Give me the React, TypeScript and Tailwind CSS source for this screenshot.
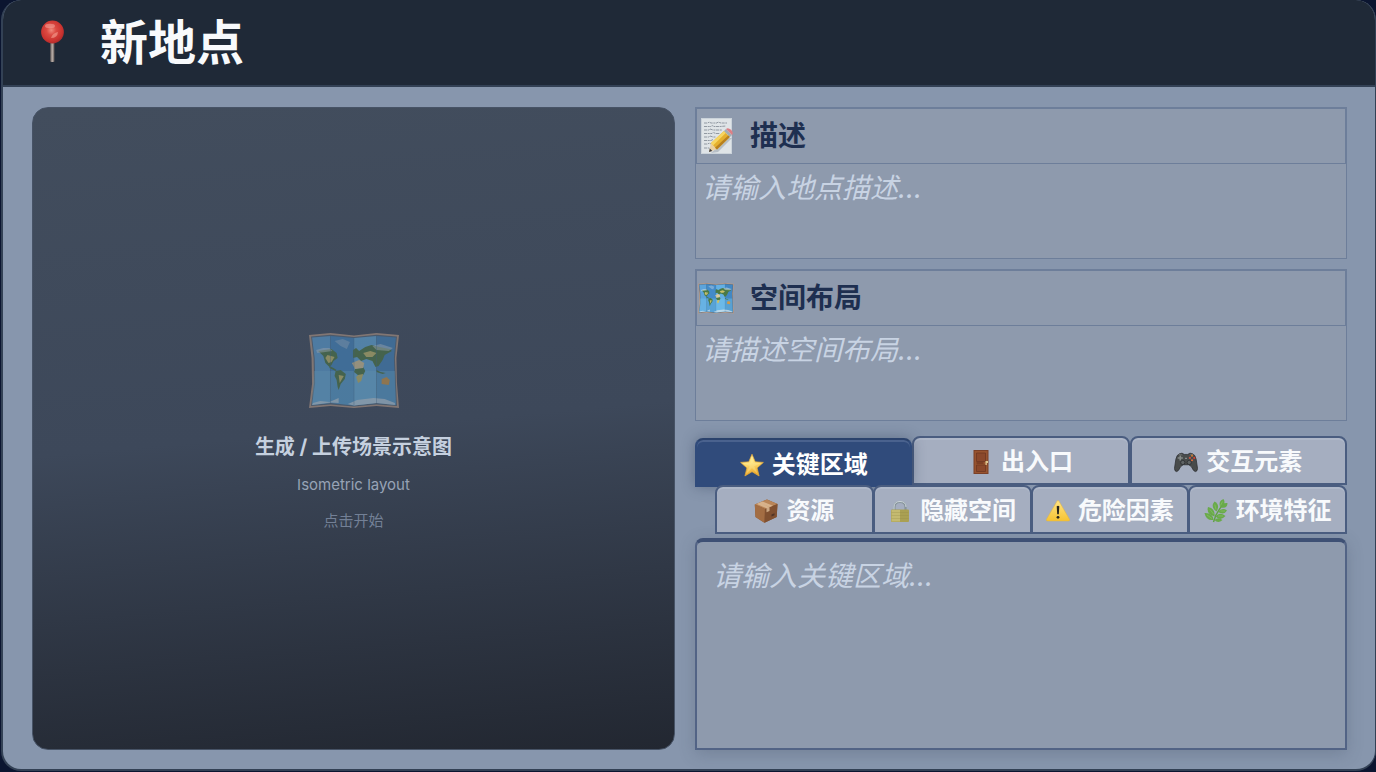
import { useState } from 'react';
import type { ReactNode } from 'react';

interface IconProps {
  className?: string;
}

function PinIcon({ className }: IconProps) {
  return (
    <svg viewBox="0 0 48 48" className={className} aria-hidden="true">
      <defs>
        <radialGradient id="pinHead" cx="0.45" cy="0.42" r="0.6">
          <stop offset="0" stopColor="#f08a7c" />
          <stop offset="0.35" stopColor="#dc4a42" />
          <stop offset="0.8" stopColor="#c9322f" />
          <stop offset="1" stopColor="#a82a2b" />
        </radialGradient>
        <linearGradient id="pinStem">
          <stop offset="0" stopColor="#6b6260" />
          <stop offset="0.5" stopColor="#b5aaa4" />
          <stop offset="1" stopColor="#5d5553" />
        </linearGradient>
      </defs>
      <path d="M22.3 23h4.2v19.500q-2.100 1.200-4.200 0z" fill="url(#pinStem)" />
      <circle cx="24.500" cy="13" r="11.400" fill="url(#pinHead)" />
      <ellipse cx="22" cy="7" rx="5" ry="2.200" fill="#f3a097" opacity="0.600" />
      <path d="M23 19q1.500-5 7-6-.5 6-7 6z" fill="#f5a394" opacity="0.600" />
    </svg>
  );
}

function MapIcon({ className }: IconProps) {
  return (
    <svg viewBox="0 0 88 76" preserveAspectRatio="none" className={className} aria-hidden="true">
      <path d="M0 2 21 0 44 2.500 66 0l22 2-2.500 23L86 50l2 25-22-2-22 2-23-2-21 2 3-24.500L2.500 25z" fill="#b99b87" />
      <path d="M2 3.500 21 1.800 44 4l22-2.200 20 1.700-2 21.500 1 25 1 23-20-1.600L44 73.500l-23-2.100L2 73l3-23L4.500 25z" fill="#55687b" />
      <path d="M3 4.500 21 3v67L3 72l3-22-.5-25z" fill="#5ca4dc" />
      <path d="M21 3l23 2v67.500L21 70z" fill="#438bc9" />
      <path d="M44 5l22-2v67l-22 2.500z" fill="#64b0e4" />
      <path d="M66 3l19 1.500L83 25l1 25 1 22-19-2z" fill="#4288c4" />
      <path d="M5 38h79l1 34-19-2-22 2.500L21 70 3 72z" fill="#77c8ee" opacity="0.400" />
      <g fill="#4b7a44">
        <path d="M9 18l6-1 7-1 5 4 1 5-4 3-2 4-2 2-4-4-2-7z" />
        <path d="M20 33l4 2 3 2-1 1-6-3z" />
        <path d="M26 38l5-1 5 4-1 5-4 5-2 6-1-3-1-7-2-4z" />
        <path d="M43 17l3-2 3 3 6-4 6-2 8 2 10 2 2 2-7 4-2 5-4 6-3 1-3-6-6-2-5 2-4-4-4 1z" />
        <path d="M45 36l8-2 2 4-2 4-4 1-5-4z" />
        <path d="M66 37l4 2 5 1-3 1-6-2z" />
      </g>
      <g fill="#c9c06b">
        <path d="M18 22l7 2-3 5-3 1-3-5z" />
        <path d="M29 42l5 1-4 7z" />
        <path d="M53 20l7-2 6 2-4 4-6 0z" />
        <path d="M48 42l5-1-2 7-3 2-2-6z" />
        <path d="M71 46l5-2 3 3-1 5-7-1z" fill="#d09a48" />
      </g>
      <path d="M42 30l7-3 5 3-1 5-8 1z" fill="#dccb9b" />
      <g fill="#dce5eb">
        <path d="M7 17l7-2 6 0 3 3-7 1-8 1z" opacity="0.500" />
        <path d="M25 8l8-2 7 3-3 7-6-3z" opacity="0.350" />
        <path d="M62 13l8-2 12 4-4 3-12-1z" opacity="0.500" />
        <path d="M4 70l7-2 9 1 9-4v5l-8-.5L3 72zM38 71l9-4 16-2 11 1 10 4v2l-18-2-22 2.500z" opacity="0.700" />
      </g>
      <path d="M21 3v67M44 5v67M66 3v67" stroke="#3c7099" strokeWidth="0.600" opacity="0.600" fill="none" />
    </svg>
  );
}

function MemoIcon({ className }: IconProps) {
  return (
    <svg viewBox="0 0 36 36" className={className} aria-hidden="true">
      <path d="M3 0h31v36H3z" fill="#cbd3da" />
      <path d="M4 1h29v34H4z" fill="#dfe4e7" />
      <path
        d="M6 5h4l1-1 2 1h6l1-1 3 1h6M6 8.500h7l1-1 2 1h6l6-.5M6 12h5l1-1 3 1h9M6 15.500h8l1-1 3 1h4M6 19h5l1-1 3 1h3M6 22.500h7l2-1M6 26h4l1-1 2 1M6 30h5l2 1"
        stroke="#88909a"
        strokeWidth="0.900"
        strokeDasharray="3 .7 2 .6"
        fill="none"
      />
      <path d="M13 35l17-15 4 0-14 14z" fill="#8f99a5" opacity="0.500" />
      <path d="M11 34l2-9 6 6z" fill="#ead0a0" />
      <path d="M11 34l.8-3.500 2.500 2.500z" fill="#3f3b3b" />
      <path d="M13 25 26 13l6 6-13 12.500z" fill="#e5b02e" />
      <path d="M13 25 26 13l2 1.800L15 27.500z" fill="#f6d560" />
      <path d="M17 29.800 30.500 17.200l1.500 1.600L19 31.500z" fill="#b8801f" />
      <path d="M26 13l2-2 6 6-2 2z" fill="#a4adb3" />
      <path d="M28 11q2-2 5 .8t1 5.200z" fill="#dd7f85" />
    </svg>
  );
}

function StarIcon({ className }: IconProps) {
  return (
    <svg viewBox="0 0 24 24" className={className} aria-hidden="true">
      <defs>
        <linearGradient id="starFill" x1="0" y1="0" x2="0.2" y2="1">
          <stop offset="0" stopColor="#fff0a0" />
          <stop offset="0.45" stopColor="#ffe27a" />
          <stop offset="1" stopColor="#eca92b" />
        </linearGradient>
      </defs>
      <path
        d="M12 1.200 15.200 8.800l8.200.6-6.300 5.500 2 8.100L12 18.700l-7.100 4.300 2-8.100L.6 9.400l8.200-.6z"
        fill="url(#starFill)"
        stroke="#e7ab38"
        strokeWidth="0.700"
        strokeLinejoin="round"
      />
      <path d="M12 3l1.500 7 8-.3-7.300 3.600 3.700 8L12 15l-5.900 6 3.500-8L2.500 9.700l8 .3z" fill="#fff3b0" opacity="0.300" />
    </svg>
  );
}

function DoorIcon({ className }: IconProps) {
  return (
    <svg viewBox="0 0 24 24" className={className} aria-hidden="true">
      <path d="M4.500 0h15v24h-15z" fill="#7b4027" />
      <path d="M5.500 1h13v22h-13z" fill="#97532f" />
      <path d="M7.500 3h9v8.500h-9zM7.500 15h9v6.500h-9z" fill="#8a482b" stroke="#6f3722" strokeWidth="0.800" />
      <path d="M7.500 13h7" stroke="#622d1b" />
      <path d="M16.500 11h2.500v2h-1.200v2h-1.300z" fill="#ddc58d" />
    </svg>
  );
}

function GamepadIcon({ className }: IconProps) {
  return (
    <svg viewBox="0 0 26 24" className={className} aria-hidden="true">
      <path
        d="M6 3q3-1.500 5 .8h4Q17 1.500 20 3q3 1 4 6l1.500 10q0 3-2.300 3.400-2 0-4.400-5.400L16 15h-6l-2.800 2Q4.800 22.400 2.800 22.400.5 22 .5 19L2 9q1-5 4-6z"
        fill="#484b4b"
        stroke="#2b2e31"
        strokeWidth="0.800"
      />
      <path d="M5 4q2-1 4 .5M17 4.500q2-1.500 4-.5" stroke="#6d7172" fill="none" />
      <path d="M6.800 5v5.500M4 7.700h5.600" stroke="#858b89" strokeWidth="1.800" />
      <circle cx="19.500" cy="5.100" r="1.200" fill="#c47b35" />
      <circle cx="22" cy="7.600" r="1.200" fill="#d34232" />
      <circle cx="17.200" cy="7.600" r="1.200" fill="#c15544" />
      <circle cx="19.500" cy="10.100" r="1.200" fill="#d96a3e" />
      <g fill="#5f6465" stroke="#292c30" strokeWidth="0.800">
        <circle cx="9.500" cy="12.500" r="2.300" />
        <circle cx="16.500" cy="12.500" r="2.300" />
      </g>
      <path d="M12 8h2" stroke="#a2a8a6" />
    </svg>
  );
}

function BoxIcon({ className }: IconProps) {
  return (
    <svg viewBox="0 0 24 24" className={className} aria-hidden="true">
      <path d="M.8 5.500 13 .5 23.500 5l-.8 13L10.500 23.800 1.500 18z" fill="#8b5936" />
      <path d="M.8 5.500 13 .5 23.500 5 11 10z" fill="#b98558" />
      <path d="M.8 5.500 11 10l-.5 13.800-9-5.800z" fill="#a36d43" />
      <path d="M11 10l12.500-5-.8 13-12.200 5.800z" fill="#805030" />
      <path d="M5 3.800 15.500 8v4l-3 1.200V9.300L2.800 5zM8.500 2.400 19 6.800l-3 1.200L5 3.800z" fill="#dfbd98" opacity="0.800" />
      <path d="M17.500 15.500l3-1.300v2l-3 1.400z" fill="#4f3326" />
    </svg>
  );
}

function LockIcon({ className }: IconProps) {
  return (
    <svg viewBox="0 0 24 24" className={className} aria-hidden="true">
      <path d="M6.500 11V8q0-5 5.500-5t5.500 5v3" stroke="#87949a" strokeWidth="2.200" fill="none" />
      <path d="M6 11V8Q6 2.500 12 2.500T18 8" stroke="#d3dde1" strokeWidth="0.900" fill="none" />
      <rect x="3" y="10.500" width="18" height="12.500" rx="1" fill="#aaa052" />
      <path d="M3.500 11h8.500v11.500H3.500z" fill="#c4ba70" />
      <path d="M3.500 13.500h17M3.500 16.500h17M3.500 19.500h17" stroke="#918745" strokeWidth="0.500" opacity="0.500" />
    </svg>
  );
}

function WarningIcon({ className }: IconProps) {
  return (
    <svg viewBox="0 0 24 24" className={className} aria-hidden="true">
      <defs>
        <linearGradient id="warnFill" x1="0" y1="0" x2="0" y2="1">
          <stop offset="0" stopColor="#ffe483" />
          <stop offset="1" stopColor="#f7c332" />
        </linearGradient>
      </defs>
      <path
        d="M11 2.200q1-1.500 2 0l10.500 18q.8 1.800-1.200 1.800H1.700q-2 0-1.200-1.800z"
        fill="url(#warnFill)"
        stroke="#e3b540"
        strokeWidth="0.500"
      />
      <path d="M10.700 7.300q1.300-.9 2.600 0l-.5 8h-1.600z" fill="#28251d" />
      <circle cx="12" cy="18.300" r="1.400" fill="#28251d" />
    </svg>
  );
}

function HerbIcon({ className }: IconProps) {
  return (
    <svg viewBox="0 0 24 24" className={className} aria-hidden="true">
      <path d="M9.500 23Q12 13 20 4.500" stroke="#60a343" strokeWidth="1.400" fill="none" />
      <g fill="#69aa4a">
        <path d="M16 8q-2-6 3.500-8Q23 5 16 8z" />
        <path d="M17 8.500q1-5 6.500-4.500 0 6-6.500 4.500z" />
        <path d="M12.500 12.500Q6 8 10.500 2.500q6 3.500 2 10z" />
        <path d="M14 13q4-5 9-1.500-3 5-9 1.500z" />
        <path d="M10.500 17.500Q2 15 4 8q7.500 1.500 6.500 9.500z" />
        <path d="M11.500 17.500q4-5 10-.5-5 5.500-10 .5z" />
        <path d="M9.500 21Q2 22 .5 14q8.500-.5 9 7z" />
        <path d="M10.500 21q3.500-3.500 8 0-4.500 4-8 0z" />
      </g>
      <path
        d="M16.500 6.500l2-4M12 10.500l-1.200-5M9.500 15l-3.500-4.500M8 19.500l-5-3.500M16.500 12h4.500M14 17h5"
        stroke="#8dc568"
        strokeWidth="0.600"
        fill="none"
      />
    </svg>
  );
}

const tabs = [
  { id: 'areas', label: '关键区域', icon: StarIcon },
  { id: 'exits', label: '出入口', icon: DoorIcon },
  { id: 'interactive', label: '交互元素', icon: GamepadIcon },
  { id: 'resources', label: '资源', icon: BoxIcon },
  { id: 'hidden', label: '隐藏空间', icon: LockIcon },
  { id: 'hazards', label: '危险因素', icon: WarningIcon },
  { id: 'environment', label: '环境特征', icon: HerbIcon },
];

interface TabButtonProps {
  tab: (typeof tabs)[number];
  active: boolean;
  onSelect: (id: string) => void;
}

function TabButton({ tab, active, onSelect }: TabButtonProps) {
  const Icon = tab.icon;

  return (
    <button
      type="button"
      role="tab"
      id={`tab-${tab.id}`}
      aria-selected={active}
      aria-controls="tab-panel"
      onClick={() => onSelect(tab.id)}
      className={
        active
          ? 'flex h-[49px] min-w-0 flex-1 translate-y-0.5 items-center justify-center gap-2 rounded-t-lg border-2 border-[#304b7b] border-t-[#2b426c] bg-[#304b7b] pt-1 text-2xl font-bold whitespace-nowrap text-white shadow-[0_0_14px_rgba(40,55,80,0.4),inset_0_2px_0_#4a628e]'
          : 'flex h-[49px] min-w-0 flex-1 items-center justify-center gap-2 rounded-t-lg border-2 border-[#4a5d80] bg-[#a5aec0] pt-0.5 text-2xl font-semibold whitespace-nowrap text-[#f8fafc] shadow-[inset_0_2px_0_#afb8c9]'
      }
    >
      <Icon className="size-6 shrink-0" />
      {tab.label}
    </button>
  );
}

interface FieldSectionProps {
  id: string;
  title: string;
  placeholder: string;
  icon: ReactNode;
}

function FieldSection({ id, title, placeholder, icon }: FieldSectionProps) {
  return (
    <section className="flex h-[152px] flex-col border border-[#6d7e9a] bg-[#8e9aad]">
      <label
        htmlFor={id}
        className="flex h-14 shrink-0 items-center gap-4 border border-[#6d7e9a] pl-px text-[28px] font-bold text-[#1e2f50]"
      >
        {icon}
        {title}
      </label>
      <textarea
        id={id}
        placeholder={placeholder}
        className="block w-full flex-1 resize-none px-1.5 py-1 text-[28px] leading-10 text-[#1e2f50] italic outline-none placeholder:text-[#c8d3e3]"
      />
    </section>
  );
}

export default function App() {
  const [activeTab, setActiveTab] = useState('areas');
  const current = tabs.find(tab => tab.id === activeTab) ?? tabs[0];

  return (
    <div className="flex min-h-screen flex-col bg-[#0b1530] pb-px pl-px font-['Inter','Noto_Sans_CJK_SC',sans-serif]">
      <div className="flex flex-1 flex-col overflow-hidden rounded-[20px] border-2 border-t-0 border-r border-[#334155] bg-[#8796ad]">
        <header className="flex h-[87px] shrink-0 items-center gap-6 border-b-2 border-[#334155] bg-[#1f2937] px-[25px]">
          <PinIcon className="size-12" />
          <h1 className="text-5xl leading-none font-bold text-[#f8fafc]">新地点</h1>
        </header>

        <main className="grid flex-1 grid-cols-1 gap-5 pt-5 pr-7 pb-[19px] pl-[29px] lg:grid-cols-[643fr_652fr]">
          {/* Scene picture placeholder */}
          <button
            type="button"
            className="flex aspect-square w-full flex-col items-center justify-center rounded-2xl border border-[#475366] bg-linear-175 from-[#424d5d] via-[#3d485a] via-50% to-[#222731] pt-2"
          >
            <MapIcon className="h-[76px] w-[90px] opacity-55" />
            <span className="mt-6 text-xl leading-7 font-bold text-[#c5d0df]">生成 / 上传场景示意图</span>
            <span className="mt-3 text-[15px] leading-6 text-[#97a3b6]">Isometric layout</span>
            <span className="mt-3 text-[15px] leading-6 text-[#738096]">点击开始</span>
          </button>

          <div className="flex min-w-0 flex-col">
            <div className="flex flex-col gap-2.5">
              <FieldSection
                id="description"
                title="描述"
                placeholder="请输入地点描述..."
                icon={<MemoIcon className="size-9 shrink-0" />}
              />
              <FieldSection
                id="layout"
                title="空间布局"
                placeholder="请描述空间布局..."
                icon={<MapIcon className="h-[31px] w-9 shrink-0" />}
              />
            </div>

            {/* Two rows of tabs, the second one indented */}
            <div role="tablist" className="mt-[15px] flex flex-col">
              <div className="flex">
                {tabs.slice(0, 3).map(tab => (
                  <TabButton key={tab.id} tab={tab} active={tab.id === activeTab} onSelect={setActiveTab} />
                ))}
              </div>
              <div className="z-10 flex -space-x-px pl-5">
                {tabs.slice(3).map(tab => (
                  <TabButton key={tab.id} tab={tab} active={tab.id === activeTab} onSelect={setActiveTab} />
                ))}
              </div>
            </div>

            <div
              id="tab-panel"
              role="tabpanel"
              aria-labelledby={`tab-${current.id}`}
              className="mt-1 flex flex-1 rounded-t-lg border-2 border-t-4 border-[#526385] border-t-[#3e5074] bg-[#8e9aad] shadow-[0_4px_16px_rgba(60,70,90,0.25)]"
            >
              <textarea
                key={current.id}
                aria-label={current.label}
                placeholder={`请输入${current.label}...`}
                className="block w-full resize-none px-4 py-3.5 text-[28px] leading-10 text-[#1e2f50] italic outline-none placeholder:text-[#c8d3e3]"
              />
            </div>
          </div>
        </main>
      </div>
    </div>
  );
}
